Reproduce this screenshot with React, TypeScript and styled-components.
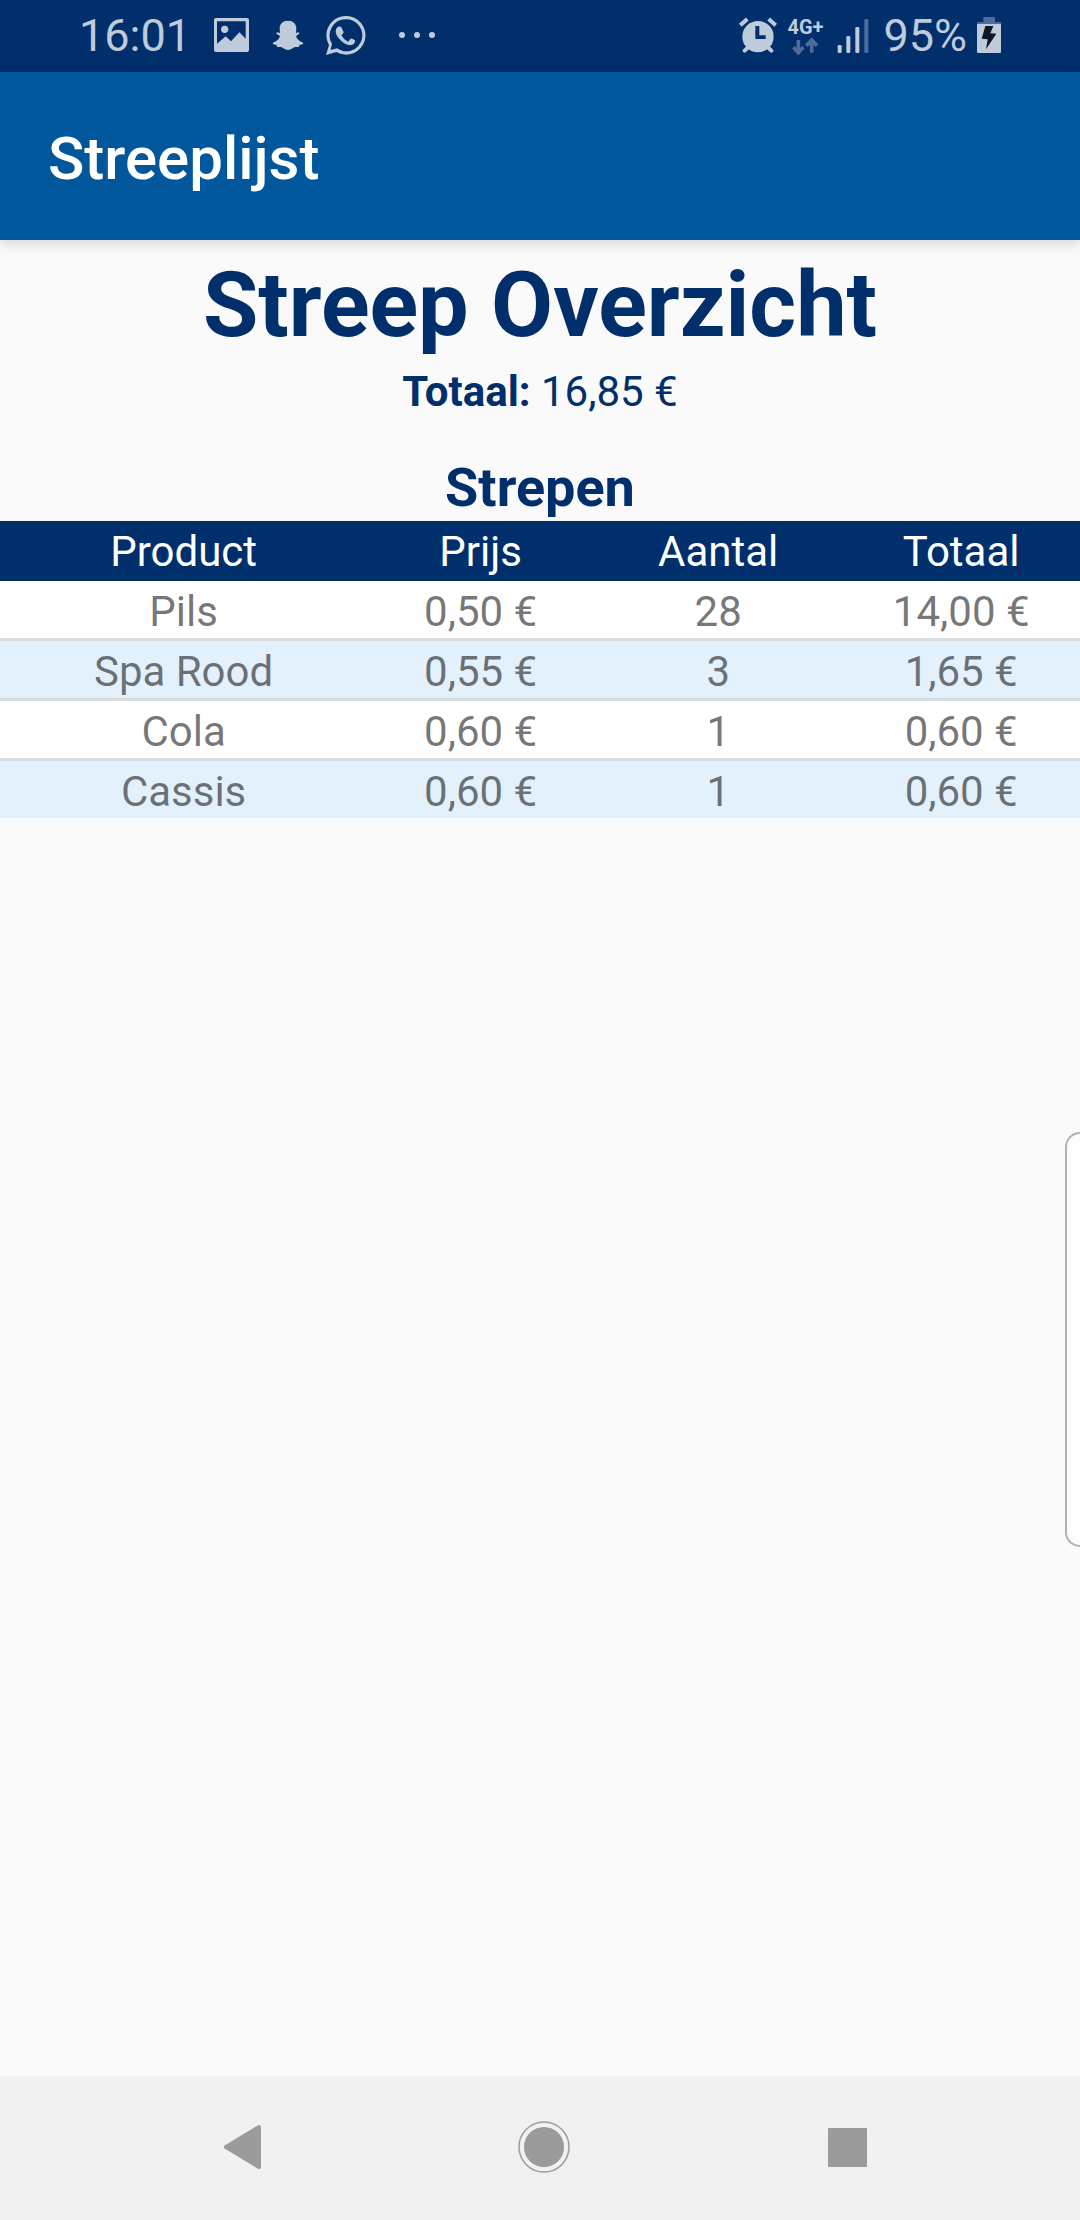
import React from "react";
import styled, { createGlobalStyle } from "styled-components";

const navy = "#002f6c";
const blue = "#01579b";
const statusInk = "#bfcbda";
const statusDim = "#4c6c99";
const navInk = "#9b9b9b";

const GlobalStyle = createGlobalStyle`
  *, *::before, *::after { box-sizing: border-box; }
  body {
    margin: 0;
    background: #fafafa;
    font-family: Roboto, "Noto Sans", sans-serif;
  }
`;

const Screen = styled.div`
  position: relative;
  display: flex;
  flex-direction: column;
  min-height: 100vh;
  overflow: hidden;
`;

const StatusBar = styled.div`
  display: flex;
  align-items: center;
  justify-content: space-between;
  height: 72px;
  padding: 0 79px;
  background: ${navy};
  color: ${statusInk};
`;

const StatusGroup = styled.div<{ $gap: number }>`
  display: flex;
  align-items: center;
  gap: ${(p) => p.$gap}px;
`;

const StatusText = styled.span`
  font-size: 45px;
  line-height: 72px;
`;

const StatusIcon = styled.svg`
  display: block;
  flex: none;
  height: 40px;
  fill: ${statusInk};
`;

const Network = styled.div`
  display: flex;
  flex-direction: column;
  align-items: center;
  width: 36px;
`;

const NetworkLabel = styled.span`
  font-size: 20px;
  font-weight: 700;
  line-height: 20px;
`;

const AppBar = styled.header`
  position: relative;
  display: flex;
  align-items: center;
  height: 168px;
  padding: 6px 48px 0;
  background: ${blue};
  box-shadow: 0 3px 12px rgba(0, 0, 0, 0.16);
`;

const AppTitle = styled.div`
  color: #fff;
  font-size: 60px;
  font-weight: 500;
  line-height: 72px;
`;

const Content = styled.main`
  flex: 1;
  padding-top: 6px;
  color: ${navy};
  text-align: center;
`;

const Heading = styled.h1`
  margin: 0;
  font-size: 90px;
  font-weight: 700;
  line-height: 120px;
`;

const Total = styled.p`
  margin: 0;
  font-size: 42px;
  line-height: 52px;
`;

const Subheading = styled.h2`
  margin: 37px 0 0;
  font-size: 54px;
  font-weight: 700;
  line-height: 66px;
`;

const Table = styled.table`
  width: 100%;
  table-layout: fixed;
  border-collapse: separate;
  border-spacing: 0;
  font-size: 42px;
  line-height: 53px;
`;

const Column = styled.col<{ $share: number }>`
  width: ${(p) => p.$share}%;
`;

const HeadCell = styled.th`
  padding: 4px 0 0;
  border-bottom: 3px solid ${navy};
  background: ${navy};
  color: #fff;
  font-weight: 400;
`;

const Cell = styled.td`
  padding: 4px 0 0;
  border-bottom: 3px solid #d9dbdc;
  color: rgba(0, 0, 0, 0.54);
`;

const Row = styled.tr`
  background: #fff;
  &:nth-child(even) { background: #e3f1fd; }
  &:last-child ${Cell} { border-bottom: 0; }
`;

const EdgeHandle = styled.div`
  position: absolute;
  top: 51%;
  right: 0;
  width: 15px;
  height: 415px;
  border: 2px solid #b2b2b2;
  border-right: 0;
  border-radius: 18px 0 0 18px;
  background: #fdfdfd;
`;

const NavBar = styled.nav`
  display: flex;
  height: 144px;
  padding: 0 83px 0 91px;
  background: #f1f1f1;
`;

const NavButton = styled.button`
  display: flex;
  flex: 1;
  align-items: center;
  justify-content: center;
  padding: 0;
  border: 0;
  background: transparent;
  cursor: pointer;
`;

const NavIcon = styled.svg`
  width: 54px;
  height: 54px;
  fill: ${navInk};
  stroke: ${navInk};
`;

const columns = [
  { name: "Product", share: 34 },
  { name: "Prijs", share: 21 },
  { name: "Aantal", share: 23 },
  { name: "Totaal", share: 22 },
];

const rows = [
  ["Pils", "0,50 €", "28", "14,00 €"],
  ["Spa Rood", "0,55 €", "3", "1,65 €"],
  ["Cola", "0,60 €", "1", "0,60 €"],
  ["Cassis", "0,60 €", "1", "0,60 €"],
];

const PictureIcon = () => (
  <StatusIcon width="37" viewBox="39 48 111 120" aria-hidden="true">
    <path
      fillRule="evenodd"
      d="M48 54H141Q147 54 147 60V150Q147 156 141 156H48Q42 156 42 150V60Q42 54 48 54ZM51 64V131L77 109L93 124L118 97L137 116V64Z"
    />
    <circle cx="74" cy="88" r="11" />
  </StatusIcon>
);

const SnapchatIcon = () => (
  <StatusIcon width="32" viewBox="217 48 96 120" aria-hidden="true">
    <path d="M265 62C281 62 290 72 290 85L289 99L296 97Q301 98 298 102L289 108C291 116 298 123 308 127Q313 129 310 132L299 136L297 141L286 141C279 143 275 150 265 150C255 150 251 143 244 141L233 141L231 136L220 132Q217 129 222 127C232 123 239 116 241 108L231 102Q228 98 233 97L241 99L240 85C240 72 249 62 265 62Z" />
  </StatusIcon>
);

const WhatsAppIcon = () => (
  <StatusIcon width="40" viewBox="378 48 120 120" aria-hidden="true">
    <path
      fillRule="evenodd"
      d="M437 48A58 58 0 1 1 409 156L378 165L387 135A58 58 0 0 1 437 48ZM437 58A48 48 0 0 0 396 131L392 150L411 145A48 48 0 1 0 437 58Z"
    />
    <path d="M413 81Q419 77 424 82L431 97Q431 100 424 106Q431 119 444 125L452 116Q455 114 465 121Q466 132 455 135C441 138 424 126 414 112C405 99 405 88 413 81Z" />
  </StatusIcon>
);

const MoreIcon = () => (
  <StatusIcon width="48" viewBox="564 48 144 120" aria-hidden="true">
    <circle cx="606" cy="105" r="9" />
    <circle cx="651" cy="105" r="9" />
    <circle cx="696" cy="105" r="9" />
  </StatusIcon>
);

const AlarmIcon = () => (
  <StatusIcon width="38" viewBox="57 48 114 120" aria-hidden="true">
    <circle cx="114" cy="110" r="47" />
    <g fill="none" stroke={statusInk}>
      <path strokeWidth="12" d="M61 76L82 57M146 57L167 76" />
      <path strokeWidth="12" strokeLinecap="round" d="M84 142L74 152M144 142L154 152" />
    </g>
    <path fill={navy} d="M106 78H118V106H137V117H106Z" />
  </StatusIcon>
);

const ArrowsIcon = () => (
  <svg width="26" height="18" viewBox="219 111 78 54" aria-hidden="true">
    <g fill="none" stroke={statusDim} strokeWidth="11">
      <path d="M238 120V156M223 142L238 158L253 142" />
      <path d="M278 158V122M262 137L278 120L294 137" />
    </g>
  </svg>
);

const SignalIcon = () => (
  <StatusIcon width="40" viewBox="339 48 120 120" aria-hidden="true">
    <rect x="353" y="135" width="12" height="24" rx="4" />
    <rect x="379" y="108" width="12" height="51" rx="4" />
    <rect x="406" y="81" width="12" height="78" rx="4" />
    <rect x="433" y="57" width="12" height="102" rx="4" fill={statusDim} />
  </StatusIcon>
);

const BatteryIcon = () => (
  <StatusIcon width="24" viewBox="348 48 72 120" aria-hidden="true">
    <path fill={statusDim} d="M367 51H402V66H420V76H348V66H367Z" />
    <path d="M348 72H420V155Q420 159 416 159H352Q348 159 348 155Z" />
    <path fill="#0c1826" d="M373 78H397L388 100L406 101L375 148L380 118L362 116Z" />
  </StatusIcon>
);

export default function App() {
  return (
    <Screen>
      <GlobalStyle />
      <StatusBar>
        <StatusGroup $gap={22}>
          <StatusText>16:01</StatusText>
          <PictureIcon />
          <SnapchatIcon />
          <WhatsAppIcon />
          <MoreIcon />
        </StatusGroup>
        <StatusGroup $gap={10}>
          <AlarmIcon />
          <Network>
            <NetworkLabel>4G+</NetworkLabel>
            <ArrowsIcon />
          </Network>
          <SignalIcon />
          <StatusText>95%</StatusText>
          <BatteryIcon />
        </StatusGroup>
      </StatusBar>
      <AppBar>
        <AppTitle>Streeplijst</AppTitle>
      </AppBar>
      <Content>
        <Heading>Streep Overzicht</Heading>
        <Total>
          <b>Totaal:</b> 16,85 €
        </Total>
        <Subheading id="strepen">Strepen</Subheading>
        <Table aria-labelledby="strepen">
          <colgroup>
            {columns.map((c) => (
              <Column key={c.name} $share={c.share} />
            ))}
          </colgroup>
          <thead>
            <tr>
              {columns.map((c) => (
                <HeadCell key={c.name} scope="col">
                  {c.name}
                </HeadCell>
              ))}
            </tr>
          </thead>
          <tbody>
            {rows.map((row) => (
              <Row key={row[0]}>
                {row.map((value, i) => (
                  <Cell key={columns[i].name}>{value}</Cell>
                ))}
              </Row>
            ))}
          </tbody>
        </Table>
      </Content>
      <NavBar>
        <NavButton type="button" aria-label="Terug">
          <NavIcon viewBox="0 0 54 54">
            <path strokeWidth="4" strokeLinejoin="round" d="M11 26L44 6V46Z" />
          </NavIcon>
        </NavButton>
        <NavButton type="button" aria-label="Startscherm">
          <NavIcon viewBox="0 0 54 54">
            <circle cx="27" cy="26" r="25" fill="none" strokeWidth="1.5" />
            <circle cx="27" cy="26" r="20" stroke="none" />
          </NavIcon>
        </NavButton>
        <NavButton type="button" aria-label="Recente apps">
          <NavIcon viewBox="0 0 54 54">
            <rect x="9" y="7" width="39" height="39" rx="1" stroke="none" />
          </NavIcon>
        </NavButton>
      </NavBar>
      <EdgeHandle />
    </Screen>
  );
}
